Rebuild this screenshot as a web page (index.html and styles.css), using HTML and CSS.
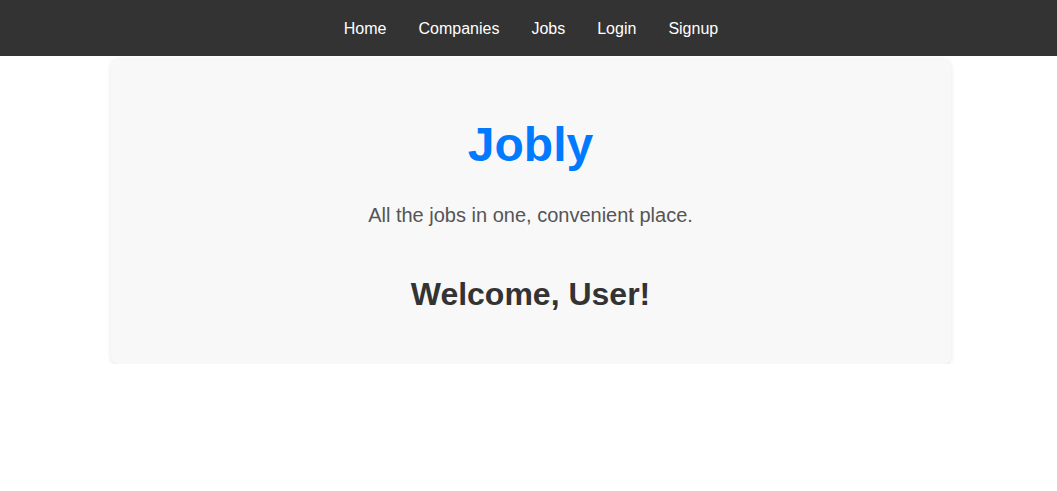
FILE: index.html
```html
<!DOCTYPE html>
<html lang="en">
<head>
<meta charset="utf-8">
<title>Jobly</title>
<link rel="stylesheet" href="styles.css">
</head>
<body>
<nav class="navbar">
  <a class="nav-link" href="#">Home</a>
  <a class="nav-link" href="#">Companies</a>
  <a class="nav-link" href="#">Jobs</a>
  <a class="nav-link" href="#">Login</a>
  <a class="nav-link" href="#">Signup</a>
</nav>
<main class="home">
  <section class="card">
    <h1 class="title">Jobly</h1>
    <p class="tagline">All the jobs in one, convenient place.</p>
    <h2 class="welcome">Welcome, User!</h2>
  </section>
</main>
</body>
</html>
```
FILE: styles.css
```css
* { box-sizing: border-box; }
body {
  margin: 0;
  font-family: "Liberation Sans", Arial, sans-serif;
  background: #fff;
}
.navbar {
  height: 56px;
  background: #333;
  display: flex;
  justify-content: center;
  align-items: center;
  padding: 2px 0 0 5px;
}
.nav-link {
  color: #fff;
  text-decoration: none;
  font-size: 16px;
  padding: 0 16px;
}
.home {
  padding-left: 4px;
}
.card {
  width: 840px;
  margin: 2px auto 0;
  background: #f8f8f8;
  border-radius: 8px;
  box-shadow: 0 2px 5px rgba(0,0,0,0.1);
  padding: 40px 20px 51px;
  text-align: center;
}
.title {
  margin: 18px 0 0;
  font-size: 48px;
  line-height: 58px;
  color: #007bff;
}
.tagline {
  margin: 29px 0 0;
  font-size: 20px;
  line-height: 24px;
  color: #555;
}
.welcome {
  margin: 48px 0 0;
  font-size: 32px;
  line-height: 38px;
  color: #333;
}
```
